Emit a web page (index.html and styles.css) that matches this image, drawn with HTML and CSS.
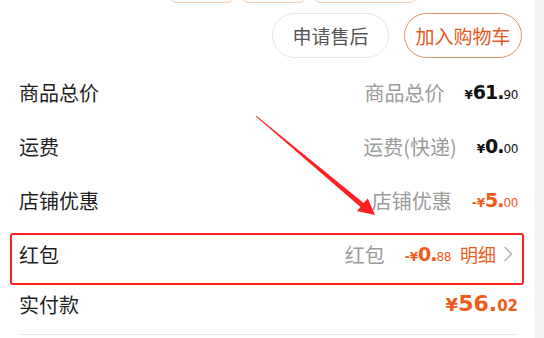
FILE: index.html
```html
<!DOCTYPE html>
<html lang="zh-CN">
<head>
<meta charset="utf-8">
<title>订单金额</title>
<link rel="stylesheet" href="styles.css">
</head>
<body>
<div class="card">
  <div class="tags">
    <span class="tag t1"></span>
    <span class="tag t1"></span>
    <span class="tag t2"></span>
  </div>
  <div class="actions">
    <div class="btn">申请售后</div>
    <div class="btn primary">加入购物车</div>
  </div>
  <div class="rows">
    <div class="row">
      <span class="label">商品总价</span>
      <span class="right"><span class="sub">商品总价</span><span class="price"><span class="yen">¥</span><span class="int">61.</span><span class="dec">90</span></span></span>
    </div>
    <div class="row">
      <span class="label">运费</span>
      <span class="right"><span class="sub">运费(快递)</span><span class="price"><span class="yen">¥</span><span class="int">0.</span><span class="dec">00</span></span></span>
    </div>
    <div class="row">
      <span class="label">店铺优惠</span>
      <span class="right"><span class="sub">店铺优惠</span><span class="price orange"><span class="yen">-¥</span><span class="int">5.</span><span class="dec">00</span></span></span>
    </div>
    <div class="row">
      <span class="label">红包</span>
      <span class="right"><span class="sub">红包</span><span class="price orange"><span class="yen">-¥</span><span class="int">0.</span><span class="dec">88</span></span><span class="detail">明细</span><svg class="chev" width="10" height="16" viewBox="0 0 10 16"><path d="M1.5 1 L8.5 8 L1.5 15" fill="none" stroke="#b8b8b8" stroke-width="1.6"/></svg></span>
    </div>
    <div class="row total">
      <span class="label">实付款</span>
      <span class="right"><span class="price orange big"><span class="yen">¥</span><span class="int">56.</span><span class="dec">02</span></span></span>
    </div>
  </div>
  <div class="divider"></div>
  <div class="highlight"></div>
  <svg class="arrow" width="535" height="338" viewBox="0 0 535 338">
    <polygon points="255.6,116.3 360.4,206.9 357.0,211.0 375,215 367.8,198.6 363.6,203.0 256.3,115.7" fill="#ff2020"/>
  </svg>
</div>
</body>
</html>
```

FILE: styles.css
```css
body {
  margin: 0;
  background: #f2f2f2;
  font-family: "Noto Sans CJK SC", "Noto Sans", sans-serif;
}

.card {
  position: relative;
  width: 535px;
  height: 338px;
  background: #ffffff;
  overflow: hidden;
}

.tags {
  height: 3px;
  display: flex;
  align-items: flex-end;
  gap: 6px;
  padding-left: 169px;
  overflow: hidden;
}

.tag {
  flex: none;
  height: 30px;
  box-sizing: border-box;
  border: 1px solid #f3cdb0;
  background: #fffaf6;
  border-radius: 8px;
}

.t1 { width: 66px; }
.t2 { width: 105px; }

.actions {
  display: flex;
  justify-content: flex-end;
  gap: 15px;
  padding: 10px 13px 0 0;
}

.btn {
  width: 117px;
  height: 45px;
  box-sizing: border-box;
  border: 1px solid #e6e6e6;
  border-radius: 23px;
  display: flex;
  align-items: center;
  justify-content: center;
  font-size: 19px;
  color: #555555;
}

.btn.primary {
  width: 118px;
  border-color: #dc9466;
  color: #e2591c;
}

.rows {
  margin-top: 7px;
}

.row {
  height: 54px;
  display: flex;
  align-items: center;
  justify-content: space-between;
  padding: 0 17px 0 19px;
}

.row.total {
  height: 46px;
}

.label {
  font-size: 20px;
  color: #1f1f1f;
}

.right {
  display: flex;
  align-items: center;
}

.sub {
  font-size: 20px;
  color: #9b9b9b;
  margin-right: 20px;
}

.price {
  font-family: "DejaVu Sans", sans-serif;
  font-weight: bold;
  color: #111111;
  white-space: nowrap;
  line-height: 1;
}

.price .yen { font-size: 12px; }
.price .int { font-size: 19px; letter-spacing: -1px; }
.price .dec { font-size: 12px; font-weight: normal; letter-spacing: -0.4px; }

.price.orange { color: #ee5b1b; }

.price.big .yen { font-size: 18px; }
.price.big .int { font-size: 22px; letter-spacing: 0; }
.price.big .dec { font-size: 15px; font-weight: bold; letter-spacing: 0; }

.detail {
  font-size: 18px;
  color: #ee5b1b;
  margin-left: 9px;
}

.chev {
  margin-left: 7px;
  margin-right: 5px;
}

.divider {
  margin: 7px 17px 0 19px;
  height: 1px;
  background: #e9e9e9;
}

.highlight {
  position: absolute;
  left: 10px;
  top: 233px;
  width: 514px;
  height: 52px;
  box-sizing: border-box;
  border: 2px solid #ff2222;
  border-radius: 3px;
}

.arrow {
  position: absolute;
  left: 0;
  top: 0;
  pointer-events: none;
}
```
